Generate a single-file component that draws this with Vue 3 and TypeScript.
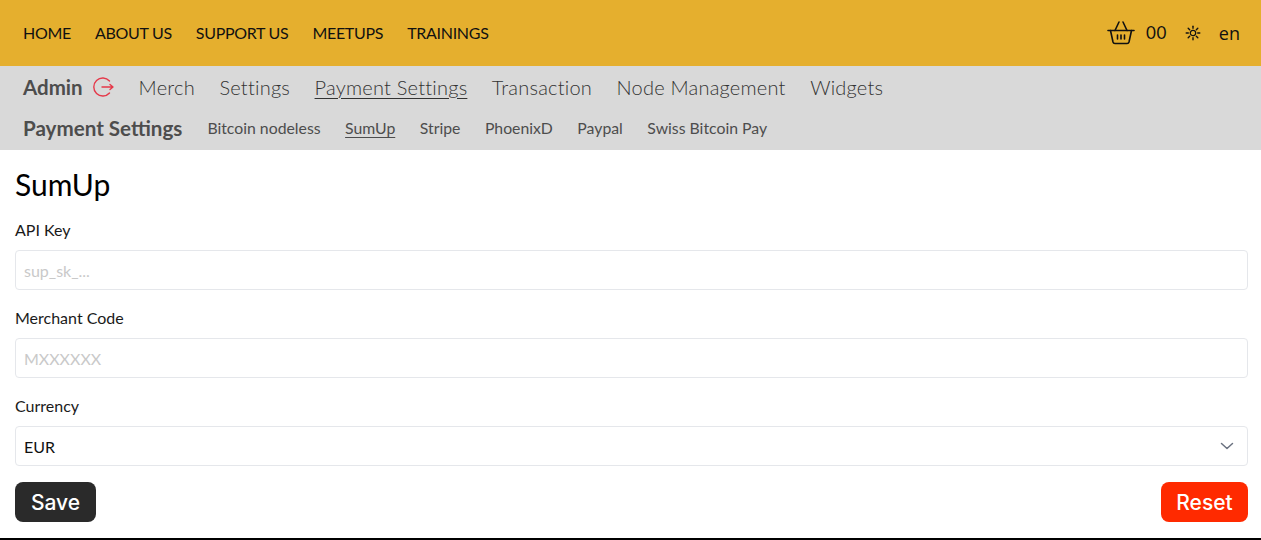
<script setup lang="ts">
const mainLinks: string[] = ['HOME', 'ABOUT US', 'SUPPORT US', 'MEETUPS', 'TRAININGS']
const adminLinks: string[] = ['Merch', 'Settings', 'Payment Settings', 'Transaction', 'Node Management', 'Widgets']
const payLinks: string[] = ['Bitcoin nodeless', 'SumUp', 'Stripe', 'PhoenixD', 'Paypal', 'Swiss Bitcoin Pay']
const sunRays: number[] = [0, 45, 90, 135, 180, 225, 270, 315]
</script>

<template>
  <div class="page">
    <header class="top">
      <nav class="main-nav">
        <a v-for="l in mainLinks" :key="l">{{ l }}</a>
      </nav>
      <div class="tools">
        <svg class="basket" width="28" height="26" viewBox="0 0 28 26" fill="none" stroke="#111" stroke-width="1.6" stroke-linecap="round" stroke-linejoin="round">
          <path d="M1 10.500h26" />
          <path d="M3.500 10.500l2.500 11.500a2 2 0 0 0 2 1.500h12a2 2 0 0 0 2-1.500l2.500-11.500" />
          <path d="M8 10.500L12 2M20 10.500L16 2" />
          <path d="M10.500 15v4M14 15v4M17.500 15v4" />
        </svg>
        <span class="count">00</span>
        <svg class="sun" width="16" height="16" viewBox="0 0 16 16" fill="none" stroke="#111" stroke-linecap="round">
          <circle cx="8" cy="8" r="2.700" stroke-width="1.300" stroke-dasharray="1.400 0.700" />
          <g stroke-width="1.400">
            <path v-for="r in sunRays" :key="r" d="M8 1.200v2.100" :transform="`rotate(${r} 8 8)`" />
          </g>
        </svg>
        <span class="lang">en</span>
      </div>
    </header>

    <section class="admin">
      <div class="admin-row">
        <span class="admin-title">Admin</span>
        <svg class="logout" width="22" height="22" viewBox="0 0 22 22" fill="none" stroke="#e5394a" stroke-width="1.400" stroke-linecap="round" stroke-linejoin="round">
          <path d="M17.500 5A9 9 0 1 0 17.500 17" />
          <path d="M10 11h11M18 8.500l3 2.500-3 2.500" />
        </svg>
        <nav class="admin-nav">
          <a v-for="l in adminLinks" :key="l" :class="{ active: l === 'Payment Settings' }">{{ l }}</a>
        </nav>
      </div>
      <div class="pay-row">
        <span class="pay-title">Payment Settings</span>
        <nav class="pay-nav">
          <a v-for="l in payLinks" :key="l" :class="{ active: l === 'SumUp' }">{{ l }}</a>
        </nav>
      </div>
    </section>

    <main class="content">
      <h1>SumUp</h1>
      <label class="field">
        <span>API Key</span>
        <input type="text" placeholder="sup_sk_..." />
      </label>
      <label class="field">
        <span>Merchant Code</span>
        <input type="text" placeholder="MXXXXXX" />
      </label>
      <label class="field">
        <span>Currency</span>
        <div class="select">
          <span class="value">EUR</span>
          <svg width="14" height="8" viewBox="0 0 14 8" fill="none" stroke="#6b7280" stroke-width="1.500" stroke-linecap="round" stroke-linejoin="round">
            <path d="M1.500 1.500L7 6.500l5.500-5" />
          </svg>
        </div>
      </label>
      <div class="actions">
        <button class="save">Save</button>
        <button class="reset">Reset</button>
      </div>
    </main>
  </div>
</template>

<style>
html, body { margin: 0; background: #fff; }
</style>

<style scoped>
.page {
  height: 540px;
  box-sizing: border-box;
  border-bottom: 2px solid #000;
  font-family: Lato, "Open Sans", sans-serif;
  overflow: hidden;
}
.top {
  height: 66px;
  background: #e5af2e;
  display: flex;
  align-items: center;
  justify-content: space-between;
  padding: 0 21px 0 23px;
  color: #111;
}
.main-nav { display: flex; gap: 24px; font-size: 16px; letter-spacing: -0.3px; margin-top: -2px; }
.tools { display: flex; align-items: center; margin-top: -1px; }
.basket { margin-right: 1px; }
.count { font-size: 17px; margin-left: 10px; letter-spacing: 0.5px; }
.sun { margin-left: 18px; }
.lang { font-size: 18px; font-weight: 500; margin-left: 18px; font-family: "Open Sans", sans-serif; }
.admin {
  height: 84px;
  background: #d9d9d9;
  box-sizing: border-box;
  padding: 6px 23px 0;
  color: #4d4d4d;
}
.admin-row { display: flex; align-items: center; height: 29px; }
.admin-title { font-size: 20.500px; font-weight: 700; }
.logout { margin-left: 9px; }
.admin-nav { display: flex; gap: 24.500px; font-size: 20px; margin-left: 25px; font-weight: 300; letter-spacing: 0.220px; color: #333; }
.active { text-decoration: underline; text-underline-offset: 3px; text-decoration-thickness: 1px; }
.pay-row { display: flex; align-items: center; margin-top: 15px; height: 24px; }
.pay-title { font-size: 20.600px; font-weight: 700; }
.pay-nav { display: flex; gap: 24.500px; font-size: 15.800px; margin-left: 25px; margin-top: -1px; }
.content { padding: 0 13px 0 15px; }
h1 {
  margin: 0;
  padding-top: 17px;
  font-size: 30px;
  line-height: 34px;
  font-weight: 400;
  color: #000;
}
.field { display: block; font-size: 16px; color: #1a1a1a; }
h1 + .field { margin-top: 18px; }
.field > span { display: block; line-height: 22px; height: 22px; margin-bottom: 9px; }
input, .select {
  display: flex;
  align-items: center;
  width: 100%;
  height: 40px;
  box-sizing: border-box;
  border: 1px solid #e5e7eb;
  border-radius: 4px;
  padding: 0 8px;
  background: #fff;
  font: inherit;
  outline: none;
}
input { font-size: 16px; }
input::placeholder { color: #c9c9c9; }
.field + .field { margin-top: 17px; }
.select { justify-content: space-between; padding-right: 13px; font-size: 16px; color: #111; }
.actions { display: flex; justify-content: space-between; margin-top: 16px; }
button {
  height: 40px;
  border: 0;
  border-radius: 8px;
  color: #fff;
  font-family: Inter, sans-serif;
  font-size: 21px;
  font-weight: 500;
  padding: 0;
}
.save { width: 81px; background: #2a2a2a; }
.reset { width: 87px; background: #ff2a00; }
</style>
